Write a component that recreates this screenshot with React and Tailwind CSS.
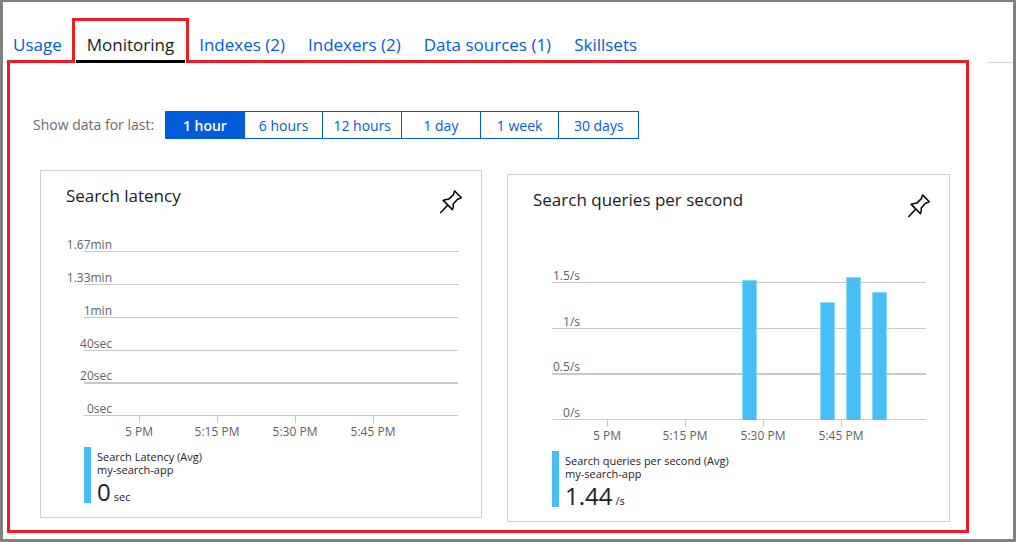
const tabs = ["Usage", "Monitoring", "Indexes (2)", "Indexers (2)", "Data sources (1)", "Skillsets"];
const ranges = ["1 hour", "6 hours", "12 hours", "1 day", "1 week", "30 days"];

const latency = {
  title: "Search latency",
  series: "Search Latency (Avg)",
  value: "0",
  unit: "sec",
  viewBox: "0 0 440 216",
  grid: [
    { y: 20, label: "1.67min" },
    { y: 53, label: "1.33min" },
    { y: 86, label: "1min" },
    { y: 119, label: "40sec" },
    { y: 151, label: "20sec", thick: true },
    { y: 184, label: "0sec" },
  ],
  bars: [],
};

const queries = {
  title: "Search queries per second",
  series: "Search queries per second (Avg)",
  value: "1.44",
  unit: "/s",
  viewBox: "-1 0 441 216",
  grid: [
    { y: 47, label: "1.5/s" },
    { y: 93, label: "1/s" },
    { y: 138, label: "0.5/s", thick: true },
    { y: 184, label: "0/s" },
  ],
  bars: [
    { x: 233, y: 45 },
    { x: 311, y: 67 },
    { x: 337, y: 42 },
    { x: 363, y: 57 },
  ],
};

const ticks = [
  { x: 98, label: "5 PM" },
  { x: 176, label: "5:15 PM" },
  { x: 254, label: "5:30 PM" },
  { x: 332, label: "5:45 PM" },
];

function PinIcon() {
  return (
    <svg viewBox="0 0 22 24" className="block h-6 w-[22px]" fill="none" stroke="#000" strokeWidth="1.5" strokeLinejoin="round" strokeLinecap="round" aria-hidden="true">
      <path d="M0.8 22.6L7.4 15.6" />
      <path d="M3.2 10.4C5 9.2 7 9.3 8.8 9.1L13.4 4.6C13.8 3.4 13.9 2 14.7 1L21.3 7.8C20.2 8.8 18.8 8.9 17.5 9.2L13.2 14C13.4 16 13.6 18 12.4 19.6Z" />
    </svg>
  );
}

function Chart({ data }) {
  return (
    <svg viewBox={data.viewBox} className="block h-auto w-full" role="img" aria-label={data.title}>
      {data.grid.map((g) => (
        <rect key={g.label} x="43" y={g.y} width="374" height={g.thick ? 2 : 1} fill="#c8c8c8" />
      ))}
      {ticks.map((t) => (
        <rect key={t.label} x={t.x} y="185" width="1" height="7" fill="#c8c8c8" />
      ))}
      {data.bars.map((b) => (
        <g key={b.x}>
          <rect x={b.x} y={b.y} width="15" height={185 - b.y} fill="#8fd8fa" />
          <rect x={b.x + 1} y={b.y + 1} width="13" height={184 - b.y} fill="#47bdf5" />
        </g>
      ))}
      <g className="fill-[#5f6164] text-[12px]">
        {data.grid.map((g) => (
          <text key={g.label} x="71" y={g.y - 2} textAnchor="end">{g.label}</text>
        ))}
        {ticks.map((t) => (
          <text key={t.label} x={t.x} y="205" textAnchor="middle">{t.label}</text>
        ))}
      </g>
    </svg>
  );
}

function Card({ data, className, legendClassName }) {
  return (
    <section className={`border border-[#d2d2d2] bg-white pb-[14px] ${className}`}>
      <header className="flex h-[60px] items-start justify-between pr-[19px] pl-[25px]">
        <h2 className="pt-[13px] text-[17px] leading-6 text-[#1b1b1b]">{data.title}</h2>
        <button type="button" aria-label={`Pin ${data.title}`} className="mt-[19px]">
          <PinIcon />
        </button>
      </header>
      <Chart data={data} />
      <div className={`flex h-14 border-l-[7px] border-[#47bdf5] pl-[6px] text-[11px] leading-[13px] text-[#1f2126] ${legendClassName}`}>
        <div className="pt-[3px]">
          <p className="font-medium">{data.series}</p>
          <p>my-search-app</p>
          <p className="flex items-baseline gap-[3px] leading-8">
            <span className="text-[24px] font-medium">{data.value}</span>
            <span>{data.unit}</span>
          </p>
        </div>
      </div>
    </section>
  );
}

export default function App() {
  return (
    <div className="flex min-h-screen flex-col bg-white font-['Open_Sans','Noto_Sans',sans-serif]">
      <div className="mr-[1px] flex-1 border-x-[3px] border-t-2 border-b-[3px] border-[#808080]">
        <div className="flex items-end">
          <span className="h-px w-1 bg-[#d6d6d6]" />
          <nav className="flex flex-1 items-end pt-4 pl-[6px] text-[17px] leading-6">
            {tabs.map((tab) =>
              tab === "Monitoring" ? (
                <a key={tab} href="#monitoring" aria-current="page" className="relative z-10 mr-[10px] ml-[10px] border-x-[3px] border-t-[3px] border-[#ed1c24] bg-white px-px text-[#1b1b1b]">
                  <span className="block border-b-[3px] border-black px-[11px] pt-3 pb-[3px]">{tab}</span>
                </a>
              ) : (
                <a key={tab} href={`#${tab}`} className={`pb-[6px] text-[#015cda] ${tab === "Usage" ? "" : "mr-[23px]"}`}>{tab}</a>
              )
            )}
          </nav>
          <span className="h-px w-[25px] bg-[#d6d6d6]" />
        </div>
        <main className="-mt-[3px] mr-11 mb-[5px] ml-1 border-[3px] border-[#ed1c24] pt-12 pr-4 pb-2 pl-[30px]">
          <div className="-ml-[7px] flex items-center gap-[11px] text-[14px]">
            <span className="pb-px text-[#6b6b6b]">Show data for last:</span>
            <div className="grid h-7 w-[474px] grid-cols-6 divide-x divide-[#015cda] border border-[#015cda]">
              {ranges.map((range, i) => (
                <button key={range} type="button" aria-pressed={i === 0} className={i === 0 ? "bg-[#015cda] font-semibold text-white" : "bg-white text-[#015cda]"}>
                  {range}
                </button>
              ))}
            </div>
          </div>
          <div className="mt-[31px] grid grid-cols-[442fr_443fr] items-start gap-[25px]">
            <Card data={latency} className="" legendClassName="ml-[43px]" />
            <Card data={queries} className="mt-1" legendClassName="ml-11" />
          </div>
        </main>
      </div>
    </div>
  );
}
